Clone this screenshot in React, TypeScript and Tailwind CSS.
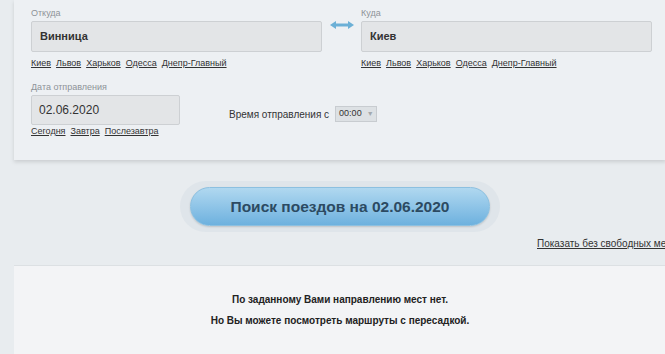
import React from 'react';

const cities = ['Киев', 'Львов', 'Харьков', 'Одесса', 'Днепр-Главный'];

const QuickLinks: React.FC<{ items: string[] }> = ({ items }) => (
    <div className="flex gap-[5px] text-[9px] leading-[12px] text-[#333]">
        {items.map((c) => (
            <a key={c} href="#" className="underline">{c}</a>
        ))}
    </div>
);

const StationField: React.FC<{ label: string; value: string }> = ({ label, value }) => (
    <div className="flex flex-col w-[291px]">
        <div className="text-[9px] leading-[10px] text-[#8e9398] mb-[3px]">{label}</div>
        <div className="h-[31px] bg-[#e3e5e7] border border-[#cdd0d3] rounded-[2px] flex items-center px-[8px] text-[11px] font-bold text-[#333]">
            {value}
        </div>
        <div className="mt-[5px]">
            <QuickLinks items={cities} />
        </div>
    </div>
);

const SwapArrow = () => (
    <svg width="26" height="10" viewBox="0 0 26 10" className="mt-[12px]">
        <path d="M5 5 H21" stroke="#6cb0d6" strokeWidth="3" />
        <path d="M1 5 L7 1 L7 9 Z" fill="#6cb0d6" />
        <path d="M25 5 L19 1 L19 9 Z" fill="#6cb0d6" />
    </svg>
);

const App: React.FC = () => {
    return (
        <div className="w-[665px] h-[354px] overflow-hidden bg-[#e8ecef]" style={{ fontFamily: '"Liberation Sans", Arial, sans-serif' }}>
            <div className="w-[680px] pl-[14px]">
                {/* search form */}
                <div className="w-[652px] bg-[#edf0f3] shadow-[0_2px_4px_rgba(0,0,0,0.13)] pt-[8px] pb-[23px] pl-[17px] pr-[14px]">
                    <div className="flex items-start">
                        <StationField label="Откуда" value="Винница" />
                        <div className="w-[39px] flex justify-center">
                            <SwapArrow />
                        </div>
                        <StationField label="Куда" value="Киев" />
                    </div>
                    <div className="flex items-start mt-[13px]">
                        <div className="flex flex-col w-[149px]">
                            <div className="text-[9px] leading-[10px] text-[#8e9398] mb-[3px]">Дата отправления</div>
                            <div className="h-[30px] bg-[#e3e5e7] border border-[#cdd0d3] rounded-[2px] flex items-center px-[7px] text-[12px] text-[#333]">
                                02.06.2020
                            </div>
                            <QuickLinks items={['Сегодня', 'Завтра', 'Послезавтра']} />
                        </div>
                        <div className="flex items-center ml-[49px] mt-[24px] gap-[6px]">
                            <span className="text-[10px] text-[#333]">Время отправления с</span>
                            <div className="h-[16px] w-[42px] bg-[#dde1e4] border border-[#c8ccd0] flex items-center pl-[3px] gap-[5px] text-[9px] text-[#333]">
                                00:00
                                <span className="text-[7px] text-[#a4a9ad]">▼</span>
                            </div>
                        </div>
                    </div>
                </div>

                {/* search button */}
                <div className="w-[652px] flex justify-center mt-[21px]">
                    <div className="rounded-full bg-[#dfe5ea] px-[10px] py-[6px]">
                        <button className="w-[300px] h-[39px] rounded-full bg-gradient-to-b from-[#b0d8f0] to-[#6db1de] border border-[#8cc0e0] shadow-[0_1px_2px_rgba(0,0,0,0.15)] text-[15.5px] font-bold text-[#2c4a62]">
                            Поиск поездов на 02.06.2020
                        </button>
                    </div>
                </div>

                <div className="flex mt-[6px] pl-[523px]">
                    <a href="#" className="text-[10px] leading-[12px] text-[#333] underline whitespace-nowrap">Показать без свободных мест</a>
                </div>

                {/* results */}
                <div className="w-[652px] mt-[15px] bg-[#f3f4f6] border-t border-[#dce0e3] pt-[28px] pb-[40px] flex flex-col items-center gap-[9px] text-[10px] leading-[12px] font-bold text-[#222]">
                    <div>По заданному Вами направлению мест нет.</div>
                    <div>Но Вы можете посмотреть маршруты с пересадкой.</div>
                </div>
            </div>
        </div>
    );
};

export default App;
